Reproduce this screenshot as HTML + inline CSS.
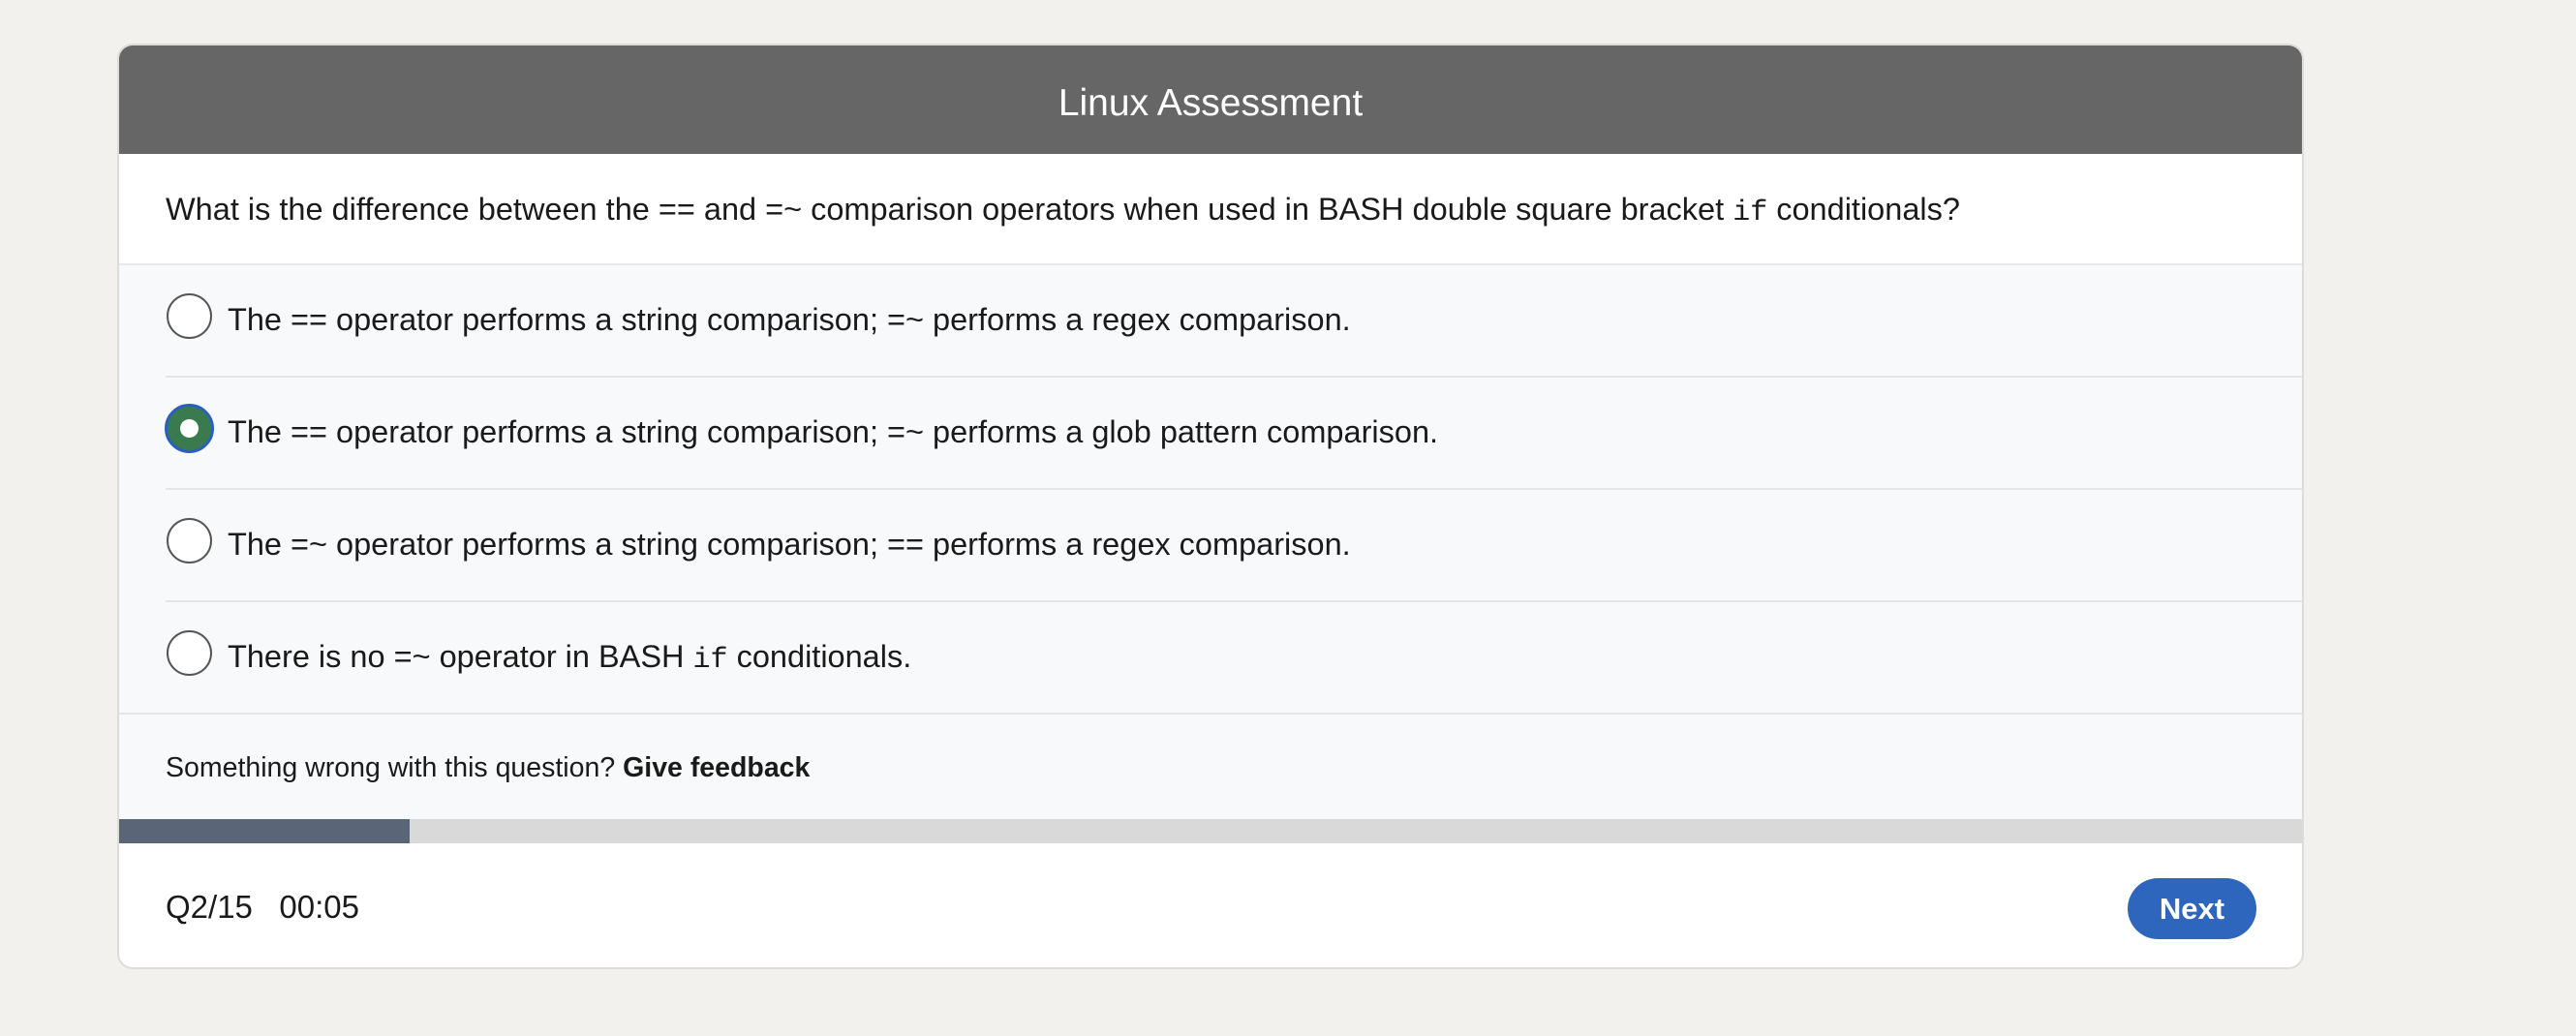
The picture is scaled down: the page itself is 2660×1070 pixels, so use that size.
<!DOCTYPE html>
<html><head><meta charset="utf-8"><style>
*{box-sizing:border-box;margin:0;padding:0}
body{width:2660px;height:1070px;background:#f2f1ee;font-family:"Liberation Sans",Arial,sans-serif;color:#1a1a1a;position:relative;overflow:hidden}
.card{position:absolute;left:121px;top:45px;width:2258px;height:956px;background:#fff;border:2px solid #dddcd8;border-radius:16px;overflow:hidden}
.hdr{position:absolute;left:0;top:0;width:100%;height:112px;background:#666;color:#fff;font-size:39px;text-align:center;line-height:112px;padding-top:4px}
.q{position:absolute;left:0;top:112px;width:100%;height:115px;font-size:32.5px;line-height:114px;padding-left:48px;border-bottom:2px solid #e8e9eb}
code{font-family:"Liberation Mono",monospace;font-size:30px}
.opts{position:absolute;left:0;top:227px;width:100%;height:572px;background:#f8f9fa}
.opt{position:absolute;left:0;width:100%;height:116px;font-size:32.5px}
.opt .t{position:absolute;left:112px;top:-2px;line-height:116px}
.opt .line{position:absolute;left:48px;right:0;bottom:0;height:2px;background:#e4e5e7}
.r{position:absolute;left:49px;top:29px;width:47px;height:47px;border:2px solid #555;border-radius:50%;background:#fff}
.r.sel{background:#3a7a4f;border:3px solid #2a5fbf;left:47px;top:27px;width:51px;height:51px}
.r.sel::after{content:"";position:absolute;left:13px;top:13px;width:19px;height:19px;border-radius:50%;background:#fff}
.fb{position:absolute;left:48px;top:693px;line-height:106px;font-size:28.5px}
.pb{position:absolute;left:0;top:799px;width:100%;height:25px;background:#d9d9d9}
.pb div{width:300px;height:100%;background:#5a6678}
.ft{position:absolute;left:48px;top:824px;line-height:131px;font-size:33px}
.next{position:absolute;left:2074px;top:860px;width:133px;height:63px;border-radius:32px;background:#2d66bc;color:#fff;font-weight:bold;font-size:31px;text-align:center;line-height:63px}
</style></head><body>
<div class="card">
<div class="hdr">Linux Assessment</div>
<div class="q">What is the difference between the == and =~ comparison operators when used in BASH double square bracket <code>if</code> conditionals?</div>
<div class="opts">
<div class="opt" style="top:0"><div class="r"></div><div class="t">The == operator performs a string comparison; =~ performs a regex comparison.</div><div class="line"></div></div>
<div class="opt" style="top:116px"><div class="r sel"></div><div class="t">The == operator performs a string comparison; =~ performs a glob pattern comparison.</div><div class="line"></div></div>
<div class="opt" style="top:232px"><div class="r"></div><div class="t">The =~ operator performs a string comparison; == performs a regex comparison.</div><div class="line"></div></div>
<div class="opt" style="top:348px"><div class="r"></div><div class="t">There is no =~ operator in BASH <code>if</code> conditionals.</div><div class="line" style="left:0"></div></div>
</div>
<div class="fb">Something wrong with this question? <b>Give feedback</b></div>
<div class="pb"><div></div></div>
<div class="ft">Q2/15&nbsp;&nbsp; 00:05</div>
<div class="next">Next</div>
</div>
</body></html>
